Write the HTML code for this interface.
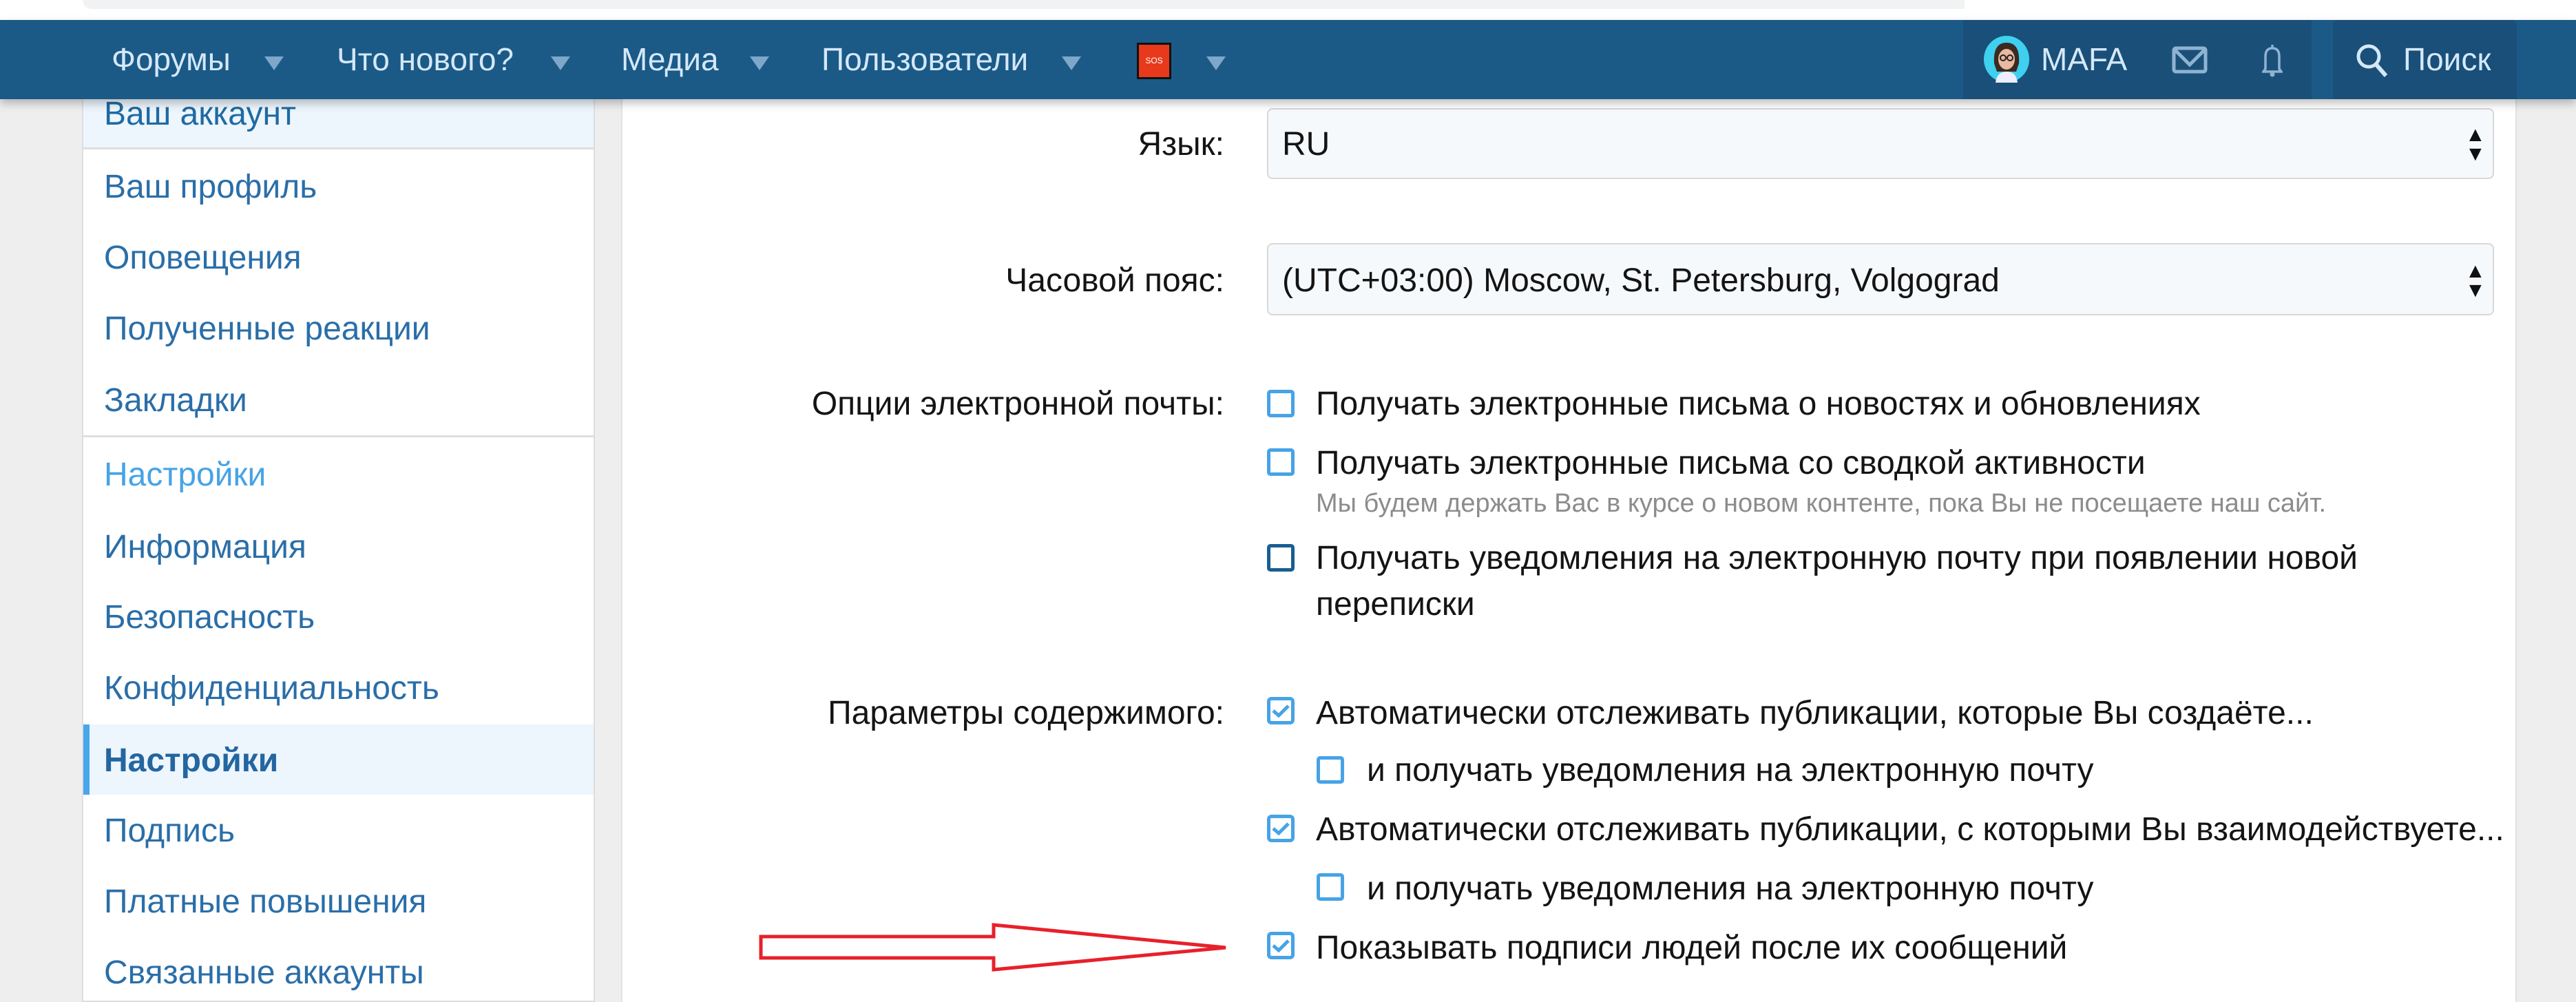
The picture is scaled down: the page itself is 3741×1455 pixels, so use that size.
<!DOCTYPE html>
<html><head><meta charset="utf-8"><style>
*{margin:0;padding:0;box-sizing:border-box}
body{width:3741px;height:1455px;overflow:hidden;background:#eeeeee;font-family:"Liberation Sans","DejaVu Sans",sans-serif;position:relative}
.a{position:absolute;white-space:nowrap}
.top{left:0;top:0;width:3741px;height:29px;background:#fff}
.nav{left:0;top:29px;width:3741px;height:115px;background:#1b5a87;box-shadow:0 6px 12px rgba(0,0,0,.25);z-index:5}
.nt{color:#d4e8f8;font-size:46px;top:30px}
.tri{width:0;height:0;border-left:14px solid transparent;border-right:14px solid transparent;border-top:20px solid #7ea7c9;top:53px}
.blk{top:0;height:115px;background:#194f78}
.side{left:119px;top:144px;width:745px;height:1311px;background:#fff;border:2px solid #dedede;border-top:none}
.sl{left:151px;font-size:48px;color:#2a6ea8}
.cont{left:902px;top:144px;width:2753px;height:1311px;background:#fff;border-left:2px solid #e2e2e2;border-right:2px solid #e2e2e2}
.lab{font-size:48px;color:#141414;right:1963px}
.tx{font-size:48px;color:#141414}
.cb{width:40px;height:40px;border:5px solid #47a3e6;border-radius:5px;background:#fff}
.sel{left:1840px;width:1782px;background:#f6f9fc;border:2px solid #d8d8d8;border-radius:8px}
.ar{left:3580px;font-size:30px;line-height:28px;color:#111}
</style></head><body>
<div class="a top"></div>
<div class="a" style="left:120px;top:0;width:2733px;height:13px;background:#f1f2f3;border-radius:0 0 0 20px"></div>
<div class="a nav">
 <div class="a nt" style="left:162px">Форумы</div><div class="a tri" style="left:384px"></div>
 <div class="a nt" style="left:489px">Что нового?</div><div class="a tri" style="left:800px"></div>
 <div class="a nt" style="left:902px">Медиа</div><div class="a tri" style="left:1089px"></div>
 <div class="a nt" style="left:1193px">Пользователи</div><div class="a tri" style="left:1542px"></div>
 <div class="a" style="left:1651px;top:33px;width:50px;height:53px;background:#e8391c;border:3px solid #111;color:#fff;font-size:12px;text-align:center;line-height:47px">SOS</div>
 <div class="a tri" style="left:1752px"></div>
 <div class="a blk" style="left:2851px;width:289px"></div>
 <div class="a blk" style="left:3140px;width:112px;background:#1a5078"></div>
 <div class="a blk" style="left:3252px;width:105px;background:#1a5078"></div>
 <div class="a blk" style="left:3388px;width:267px;border-radius:8px 8px 0 0"></div>
 <svg class="a" style="left:2880px;top:23px" width="68" height="68" viewBox="0 0 68 68"><ellipse cx="34" cy="34" rx="33" ry="34" fill="#3fd0ef"/><path d="M16 40 Q14 10 34 10 Q54 10 52 40 L48 52 L20 52Z" fill="#3b2a22"/><ellipse cx="34" cy="34" rx="12" ry="15" fill="#e9b9a0"/><path d="M18 68 Q20 52 34 52 Q48 52 50 68Z" fill="#eef"/><circle cx="29" cy="32" r="4" fill="none" stroke="#222" stroke-width="2"/><circle cx="39" cy="32" r="4" fill="none" stroke="#222" stroke-width="2"/></svg>
 <div class="a nt" style="left:2964px">MAFA</div>
 <svg class="a" style="left:3154px;top:38px" width="54" height="42" viewBox="0 0 54 42"><rect x="3" y="3" width="46" height="34" rx="3" fill="none" stroke="#8fb3d2" stroke-width="5"/><path d="M5 6 L26 27 L47 6" fill="none" stroke="#8fb3d2" stroke-width="5"/></svg>
 <svg class="a" style="left:3285px;top:33px" width="30" height="50" viewBox="0 0 30 50"><path d="M15 3 L15 8 M5 38 L5 20 Q5 8 15 8 Q25 8 25 20 L25 38 L28 42 L2 42 L5 38Z" fill="none" stroke="#8fb3d2" stroke-width="3.5"/><circle cx="15" cy="46" r="3.5" fill="#8fb3d2"/></svg>
 <svg class="a" style="left:3420px;top:33px" width="50" height="52" viewBox="0 0 50 52"><circle cx="20" cy="20" r="15" fill="none" stroke="#d4e8f8" stroke-width="5"/><path d="M31 32 L45 48" stroke="#d4e8f8" stroke-width="6"/></svg>
 <div class="a nt" style="left:3490px">Поиск</div>
</div>
<div class="a side">
 <div class="a" style="left:0;top:0;width:741px;height:73px;background:#edf5fd;border-bottom:3px solid #dedede"></div>
 <div class="a" style="left:0;top:488px;width:741px;height:3px;background:#dedede"></div>
 <div class="a" style="left:0;top:908px;width:741px;height:102px;background:#edf5fd;border-left:9px solid #47a7eb"></div>
</div>
<div class="a sl" style="top:138px;color:#1f6aa3">Ваш аккаунт</div>
<div class="a sl" style="top:244px">Ваш профиль</div>
<div class="a sl" style="top:347px">Оповещения</div>
<div class="a sl" style="top:450px">Полученные реакции</div>
<div class="a sl" style="top:554px">Закладки</div>
<div class="a sl" style="top:662px;color:#47a3e6">Настройки</div>
<div class="a sl" style="top:767px">Информация</div>
<div class="a sl" style="top:869px">Безопасность</div>
<div class="a sl" style="top:972px">Конфиденциальность</div>
<div class="a sl" style="top:1077px;font-weight:bold;color:#2366a0">Настройки</div>
<div class="a sl" style="top:1179px">Подпись</div>
<div class="a sl" style="top:1282px">Платные повышения</div>
<div class="a sl" style="top:1385px">Связанные аккаунты</div>
<div class="a cont"></div>
<div class="a lab" style="top:182px">Язык:</div>
<div class="a sel" style="top:157px;height:103px"></div>
<div class="a tx" style="left:1862px;top:182px">RU</div>
<div class="a ar" style="top:182px">▲<br>▼</div>
<div class="a lab" style="top:380px">Часовой пояс:</div>
<div class="a sel" style="top:353px;height:105px"></div>
<div class="a tx" style="left:1862px;top:380px">(UTC+03:00) Moscow, St. Petersburg, Volgograd</div>
<div class="a ar" style="top:380px">▲<br>▼</div>
<div class="a lab" style="top:559px">Опции электронной почты:</div>
<div class="a cb" style="left:1840px;top:566px"></div>
<div class="a tx" style="left:1911px;top:559px">Получать электронные письма о новостях и обновлениях</div>
<div class="a cb" style="left:1840px;top:651px"></div>
<div class="a tx" style="left:1911px;top:645px">Получать электронные письма со сводкой активности</div>
<div class="a" style="left:1911px;top:710px;font-size:38px;color:#8c8c8c">Мы будем держать Вас в курсе о новом контенте, пока Вы не посещаете наш сайт.</div>
<div class="a cb" style="left:1840px;top:790px;border-color:#185e92"></div>
<div class="a tx" style="left:1911px;top:783px">Получать уведомления на электронную почту при появлении новой</div>
<div class="a tx" style="left:1911px;top:850px">переписки</div>
<div class="a lab" style="top:1008px">Параметры содержимого:</div>
<svg width="0" height="0" style="position:absolute"><defs><symbol id="ck" viewBox="0 0 40 40"><rect x="2.5" y="2.5" width="35" height="35" rx="4" fill="#fff" stroke="#47a3e6" stroke-width="5"/><path d="M9 20 L17 27 L31 13" fill="none" stroke="#47a3e6" stroke-width="5"/></symbol></defs></svg>
<svg class="a" style="left:1840px;top:1012px" width="40" height="40"><use href="#ck"/></svg>
<div class="a tx" style="left:1911px;top:1008px">Автоматически отслеживать публикации, которые Вы создаёте...</div>
<div class="a cb" style="left:1912px;top:1098px"></div>
<div class="a tx" style="left:1985px;top:1091px">и получать уведомления на электронную почту</div>
<svg class="a" style="left:1840px;top:1183px" width="40" height="40"><use href="#ck"/></svg>
<div class="a tx" style="left:1911px;top:1177px">Автоматически отслеживать публикации, с которыми Вы взаимодействуете...</div>
<div class="a cb" style="left:1912px;top:1268px"></div>
<div class="a tx" style="left:1985px;top:1263px">и получать уведомления на электронную почту</div>
<svg class="a" style="left:1840px;top:1353px" width="40" height="40"><use href="#ck"/></svg>
<div class="a tx" style="left:1911px;top:1349px">Показывать подписи людей после их сообщений</div>
<svg class="a" style="left:0;top:0" width="3741" height="1455"><path d="M1105 1360 L1443 1360 L1443 1343 L1780 1376 L1443 1408 L1443 1391 L1105 1391 Z" fill="none" stroke="#e8202a" stroke-width="5"/></svg>
</body></html>
